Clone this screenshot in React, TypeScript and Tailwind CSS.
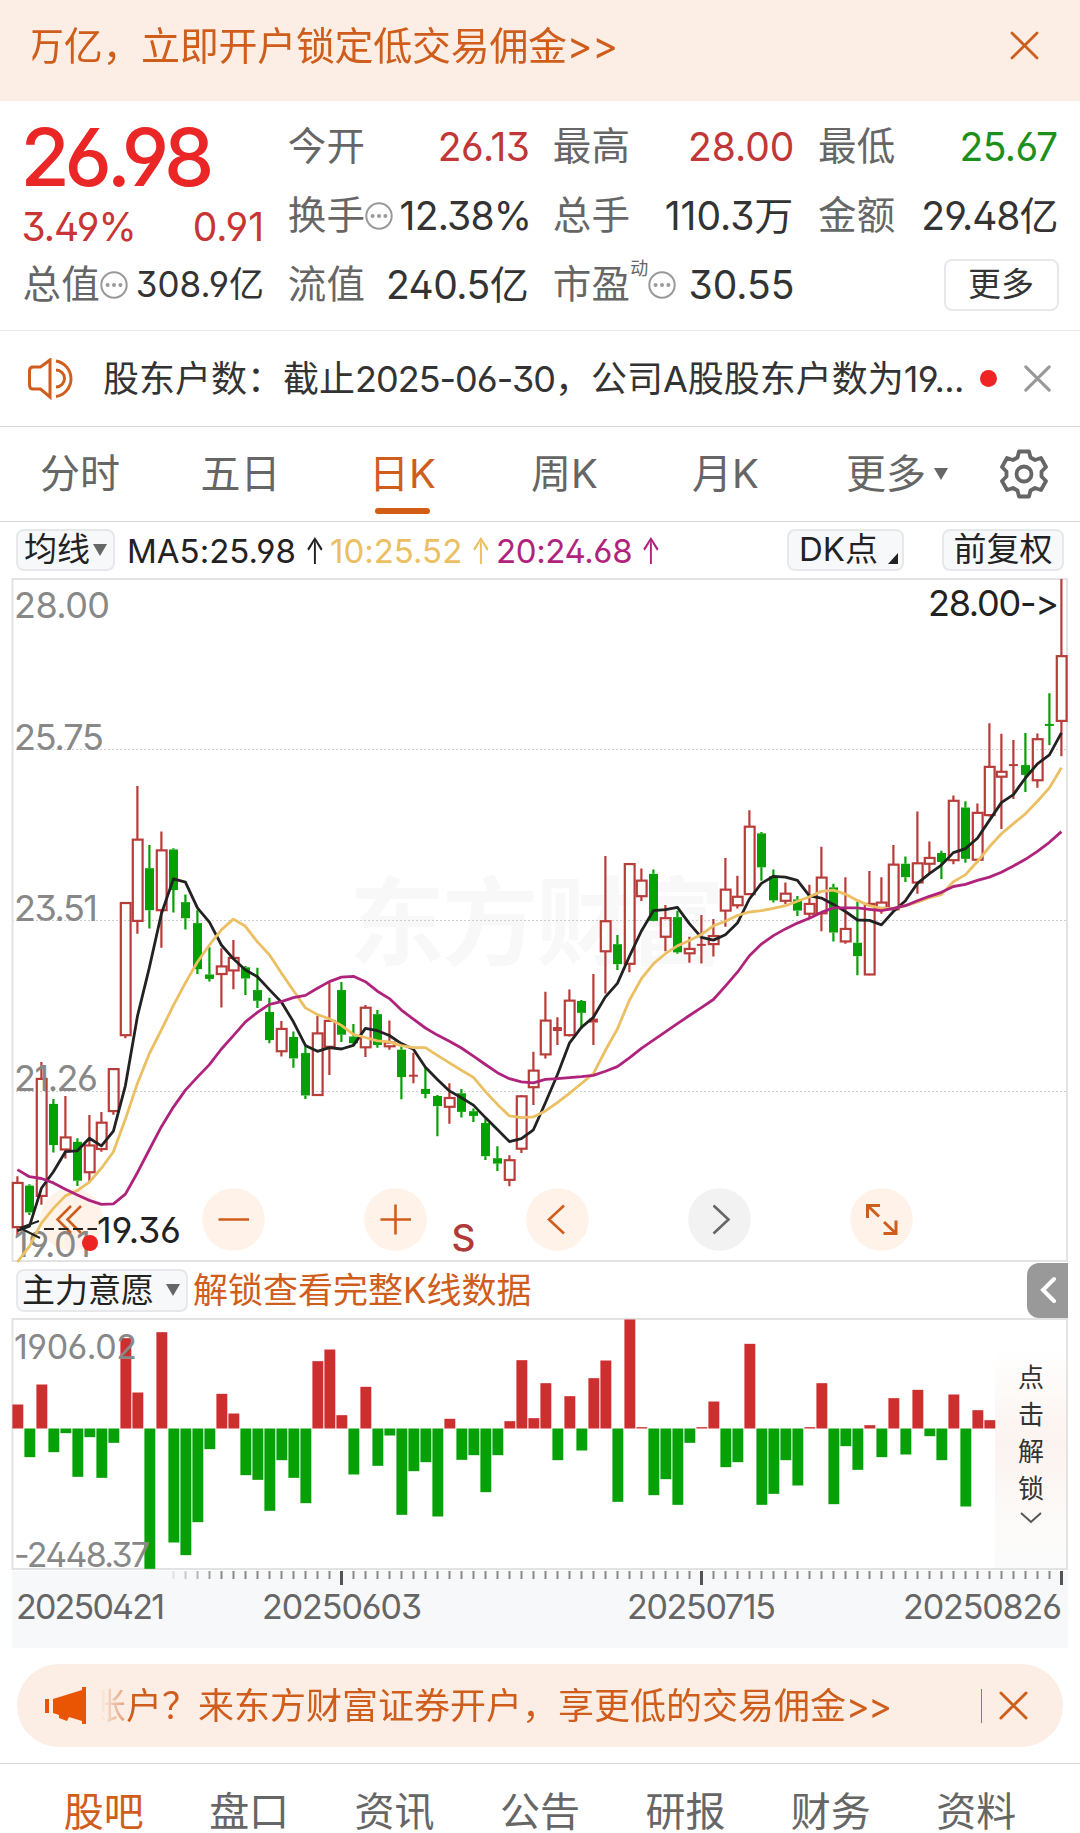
import React from "react";

type Candle = ["r" | "g", number, number, number, number];

// Each candle: colour, body top, body bottom, wick top, wick bottom.
const scaleA = (y: number) => 570 + y / 2.24;
const scaleB = (y: number) => 740 + y / 2.958;

const candlesLeft: Candle[] = [
  ["r", 1373, 1472, 1358, 1490], ["g", 1379, 1439, 1376, 1445], ["r", 1140, 1402, 1102, 1422],
  ["g", 1196, 1288, 1185, 1305], ["r", 1271, 1298, 1178, 1318], ["g", 1281, 1368, 1273, 1380],
  ["r", 1289, 1349, 1221, 1370], ["r", 1238, 1297, 1214, 1303], ["r", 1118, 1212, 1116, 1220],
  ["r", 746, 1042, 744, 1049], ["r", 604, 786, 484, 815], ["g", 668, 762, 616, 803],
  ["r", 628, 762, 586, 846], ["g", 626, 717, 623, 767], ["g", 744, 780, 727, 805],
  ["g", 791, 894, 762, 905], ["g", 906, 916, 845, 922], ["r", 888, 905, 847, 980],
  ["r", 869, 897, 829, 939], ["g", 890, 915, 887, 952], ["g", 941, 965, 891, 981],
  ["g", 990, 1053, 958, 1060], ["r", 1028, 1078, 1010, 1090], ["g", 1046, 1094, 1034, 1115],
  ["g", 1082, 1177, 1065, 1185], ["r", 1038, 1176, 999, 1178], ["r", 1010, 1068, 925, 1131],
  ["g", 941, 1041, 923, 1057], ["g", 1045, 1060, 1017, 1064],
];
const candlesMiddle: Candle[] = [
  ["r", 792, 909, 784, 938], ["g", 811, 902, 799, 910], ["r", 895, 906, 830, 916],
  ["g", 916, 997, 906, 1063], ["r", 993, 993, 925, 1015], ["g", 1032, 1047, 968, 1060],
  ["g", 1053, 1083, 1050, 1172], ["r", 1059, 1085, 1015, 1135], ["g", 1045, 1100, 1032, 1117],
  ["g", 1098, 1112, 1090, 1130], ["g", 1133, 1231, 1120, 1242], ["g", 1237, 1253, 1202, 1275],
  ["r", 1243, 1301, 1228, 1320], ["r", 1054, 1209, 1050, 1222], ["r", 978, 1027, 922, 1080],
  ["r", 830, 930, 745, 942], ["r", 855, 861, 820, 902], ["r", 771, 873, 738, 877],
  ["g", 772, 807, 769, 855], ["r", 830, 836, 692, 902], ["r", 536, 625, 343, 750],
  ["g", 604, 663, 577, 680], ["r", 367, 662, 364, 687], ["r", 416, 462, 380, 476],
  ["g", 396, 535, 383, 536], ["r", 527, 582, 488, 625], ["g", 524, 628, 505, 632],
  ["r", 618, 631, 582, 659], ["r", 606, 606, 518, 661],
];
const candlesRight: Candle[] = [
  ["r", 820, 838, 782, 866], ["r", 716, 763, 645, 799], ["r", 732, 751, 685, 758],
  ["r", 575, 726, 538, 728], ["g", 590, 666, 587, 696], ["g", 686, 740, 671, 745],
  ["r", 725, 741, 700, 748], ["g", 738, 763, 730, 775], ["r", 748, 770, 705, 782],
  ["r", 689, 769, 620, 809], ["g", 711, 812, 703, 832], ["r", 804, 832, 688, 837],
  ["g", 835, 865, 743, 908], ["r", 748, 906, 674, 908], ["r", 745, 757, 688, 770],
  ["r", 660, 760, 616, 762], ["g", 658, 688, 642, 699], ["r", 657, 700, 541, 725],
  ["r", 645, 658, 608, 680], ["g", 634, 654, 629, 692], ["r", 517, 650, 505, 659],
  ["g", 532, 647, 518, 656], ["r", 544, 649, 523, 655], ["r", 441, 549, 343, 552],
  ["r", 452, 463, 367, 580], ["r", 437, 437, 381, 513], ["g", 437, 459, 365, 497],
  ["r", 379, 471, 366, 488], ["g", 347, 347, 276, 392], ["r", 193, 338, 20, 417],
];

const mapCandle = (f: (y: number) => number) => (c: Candle): Candle => [c[0], f(c[1]), f(c[2]), f(c[3]), f(c[4])];
const candles: Candle[] = [
  ...candlesLeft.map(mapCandle(scaleA)),
  ...candlesMiddle.map(mapCandle(scaleB)),
  ...candlesRight.map(mapCandle(scaleA)),
];

const toLine = (a: number[], b: number[], c: number[]) =>
  [...a.map(scaleA), ...b.map(scaleB), ...c.map(scaleA)]
    .map((y, i) => `${(17.4 + 12 * i).toFixed(1)},${y.toFixed(1)}`)
    .join(" ");

const ma5 = toLine(
  [1480, 1470, 1385, 1348, 1303, 1301, 1273, 1290, 1257, 1155, 1000, 890, 770, 692, 699, 757, 789, 840, 871, 896, 911, 940, 968, 1012, 1065, 1078, 1070, 1073, 1065],
  [853, 860, 874, 898, 915, 968, 1004, 1038, 1058, 1080, 1117, 1152, 1188, 1179, 1153, 1073, 990, 897, 850, 820, 760, 720, 640, 565, 505, 502, 495, 543, 584],
  [829, 817, 791, 737, 702, 686, 688, 695, 730, 735, 749, 765, 784, 785, 795, 765, 741, 702, 680, 661, 633, 624, 601, 561, 521, 503, 466, 434, 414, 365],
);
const ma10 = toLine(
  [1550, 1515, 1463, 1430, 1402, 1390, 1371, 1340, 1303, 1230, 1150, 1083, 1030, 975, 925, 878, 840, 806, 782, 798, 833, 862, 903, 942, 981, 996, 1005, 1020, 1040],
  [880, 890, 893, 904, 910, 910, 933, 955, 977, 998, 1040, 1078, 1112, 1117, 1115, 1097, 1073, 1045, 1016, 987, 918, 855, 770, 706, 662, 632, 609, 593, 575],
  [797, 787, 774, 766, 763, 758, 752, 742, 732, 720, 717, 726, 740, 752, 758, 758, 752, 744, 734, 727, 698, 683, 653, 620, 591, 568, 546, 518, 488, 443],
);
const ma20 = toLine(
  [1343, 1359, 1363, 1373, 1387, 1400, 1412, 1421, 1420, 1398, 1350, 1298, 1247, 1203, 1165, 1136, 1108, 1073, 1043, 1012, 991, 973, 967, 958, 953, 937, 922, 912, 910],
  [715, 743, 765, 799, 826, 852, 873, 891, 911, 935, 960, 984, 1002, 1011, 1014, 1004, 1002, 999, 996, 992, 980, 966, 940, 912, 888, 863, 839, 815, 792],
  [962, 932, 901, 864, 838, 819, 804, 791, 780, 767, 757, 757, 757, 760, 763, 758, 752, 741, 731, 722, 709, 704, 695, 688, 677, 663, 648, 630, 610, 586],
);

// Signed bar lengths in thirds of a pixel; positive values rise above the zero line.
const flows = [
  72, -86, 132, -71, -14, -145, -26, -148, -43, 271, 108, -421, 289, -342, -380, -281, -62, 104, 45, -140, -154, -247,
  -95, -148, -224, 202, 237, 40, -138, 125, -112, -21, -259, -128, -101, -264, 29, -94, -80, -191, -80, 22, 205, 31,
  136, -95, 97, -66, 151, 204, -220, 327, 4, -200, -152, -229, -43, 4, 81, -116, -101, 254, -229, -196, -95, -171, 4,
  136, -227, -53, -124, 10, -86, 91, -78, 116, -23, -95, 102, -234, 55, 25,
];

const RED = "#b83c3a";
const GREEN = "#06a006";

function Cross({ size, width = 3 }: { size: number; width?: number }) {
  return (
    <svg width={size} height={size} viewBox="0 0 30 30" fill="none" stroke="currentColor" strokeWidth={width} strokeLinecap="round">
      <path d="M2 2 28 28M28 2 2 28" />
    </svg>
  );
}

function Dots() {
  return (
    <svg width="28" height="28" viewBox="0 0 28 28" fill="none">
      <circle cx="14" cy="14" r="12.7" stroke="#999" strokeWidth="2" />
      <g fill="#999"><circle cx="7.6" cy="14" r="2" /><circle cx="14" cy="14" r="2" /><circle cx="20.4" cy="14" r="2" /></g>
    </svg>
  );
}

function Triangle({ className = "" }: { className?: string }) {
  return (
    <svg width="14" height="12" viewBox="0 0 14 12" className={className}><path d="M0 0H14L7 12Z" fill="#666" /></svg>
  );
}

function Arrow() {
  return <span className="ml-[9px] inline-block w-[19px] origin-left scale-x-[0.72] scale-y-[1.12]">↑</span>;
}

function Quote({ label, value, tone = "text-[#333]", dots, sup, cls = "text-[39px] mr-[-2px]" }: { label: string; value: string; tone?: string; dots?: boolean; sup?: string; cls?: string }) {
  return (
    <div className="flex h-[69px] items-center whitespace-nowrap">
      <span className="text-[38.5px] tracking-[0.3px] text-[#666]">{label}</span>
      {sup && <span className="mb-8 text-[18px] text-[#666]">{sup}</span>}
      {dots && <Dots />}
      <span className={`ml-auto ${tone} ${cls}`}>{value}</span>
    </div>
  );
}

function PriceChart() {
  return (
    <svg width="1080" height="686" viewBox="0 577 1080 686" className="block" fill="none">
      <text x="349" y="957" fontSize="96" fontWeight="700" textLength="376" fill="#f8f8f8">东方财富</text>
      <g stroke="#cfcfcf" strokeWidth="1" strokeDasharray="2 2">
        <path d="M12 749.5H1067M12 920.5H1067M12 1091.5H1067" />
      </g>
      <rect x="12.5" y="579" width="1054.5" height="682" stroke="#e3e3e3" strokeWidth="2" />
      <g>
        {candles.map(([tone, top, bottom, high, low], i) => {
          const x = 17.4 + 12 * i;
          const colour = tone === "r" ? RED : GREEN;
          const flat = bottom - top < 3;
          return (
            <g key={i} stroke={colour} strokeWidth="2.2">
              <path d={`M${x} ${high}V${top}M${x} ${bottom}V${low}`} />
              {flat ? (
                <path d={`M${x - 4.5} ${top}h9`} strokeWidth={bottom > top ? 4 : 2} />
              ) : tone === "r" ? (
                <rect x={x - 4.6} y={top} width="9.8" height={bottom - top} />
              ) : (
                <rect x={x - 4.4} y={top} width="9" height={bottom - top} fill={GREEN} stroke="none" />
              )}
            </g>
          );
        })}
      </g>
      <g fill="#888" fontSize="36">
        <text x="14" y="618" textLength="96">28.00</text>
        <text x="14" y="750" textLength="90">25.75</text>
        <text x="14" y="921" textLength="84">23.51</text>
        <text x="14" y="1091" textLength="84">21.26</text>
      </g>
      <g fill="#fff1e8">
        {[71.5, 233.5, 395.5, 557.5, 881.5].map((x) => <circle key={x} cx={x} cy="1219.5" r="31.3" opacity="0.95" />)}
        <circle cx="719.5" cy="1219.5" r="31.3" fill="#f2f2f2" />
      </g>
      <text x="14" y="1257" fontSize="36" textLength="77" fill="#888">19.01</text>
      <g strokeWidth="2.8" strokeLinejoin="round">
        <polyline points={ma5} stroke="#222" />
        <polyline points={ma10} stroke="#ebbf62" />
        <polyline points={ma20} stroke="#b0237c" />
      </g>
      <g stroke="#cf5d1c" strokeWidth="2.6">
        <path d="M71 1206 57.5 1219.5 71 1233M81 1206 67.5 1219.5 81 1233" />
        <path d="M218.5 1219.5H249M380.5 1219.5H411M395.5 1204.5V1234.5M564 1205.5 549 1219.5 564 1233.5" />
        <path d="M713.5 1205.5 728.5 1219.5 713.5 1233.5" stroke="#666" />
        <path d="M867.5 1218V1205.5H880M868 1206 879 1216.5M896 1220.5V1233.5H883.5M895.5 1233 884 1222" strokeWidth="3" />
      </g>
      <path d="M20 1228 39 1221M20 1228 40 1238" stroke="#222" strokeWidth="2" />
      <path d="M44 1229H97" stroke="#222" strokeWidth="2" strokeDasharray="10 4.5" />
      <text x="97" y="1243" fontSize="36" textLength="84" fill="#222">19.36</text>
      <circle cx="90" cy="1243" r="8" fill="#ee2424" />
      <text x="928" y="616" fontSize="36" textLength="131" fill="#222">28.00-&gt;</text>
      <text x="451.5" y="1251" fontSize="37" fontWeight="450" textLength="23" fill="#b03a38">S</text>
    </svg>
  );
}

function FlowChart() {
  return (
    <svg width="1080" height="331" viewBox="0 1317 1080 331" className="block" fill="none">
      <defs>
        <linearGradient id="unlock" x1="0" y1="0" x2="0" y2="1">
          <stop offset="0.12" stopColor="#fff" /><stop offset="0.5" stopColor="#fbf3ef" /><stop offset="0.85" stopColor="#fcfbfa" /><stop offset="1" stopColor="#fafafa" />
        </linearGradient>
      </defs>
      <rect x="995" y="1320" width="72" height="248" fill="url(#unlock)" />
      <rect x="12.5" y="1319" width="1054.5" height="250" stroke="#e3e3e3" strokeWidth="2" />
      {flows.map((v, i) => (
        <rect key={i} x={12.4 + 12 * i} y={v > 0 ? 1428.5 - v / 3 : 1428.5} width="10.9" height={Math.abs(v) / 3} fill={v > 0 ? "#cd2e2e" : "#07a007"} />
      ))}
      <g fill="#888" fontSize="34">
        <text x="14" y="1359" textLength="123">1906.02</text>
        <text x="14" y="1567" textLength="136">-2448.37</text>
      </g>
      <g fill="#333" fontSize="26" textAnchor="middle">
        <text x="1031" y="1387">点</text><text x="1031" y="1424">击</text><text x="1031" y="1461">解</text><text x="1031" y="1498">锁</text>
      </g>
      <path d="M1021 1513 1031 1522 1041 1513" stroke="#555" strokeWidth="2" />
      <rect x="12" y="1571" width="1056" height="77" fill="#f7f8fa" />
      {Array.from({ length: 75 }, (_, k) => {
        const i = k + 13;
        const major = i === 27 || i === 57 || i === 87;
        return <path key={i} d={`M${17.5 + 12 * i} 1571v${major ? 14 : 8}`} stroke={major ? "#555" : "#888"} strokeWidth={major ? 3 : 2} opacity={k < 4 ? 0.2 + k * 0.2 : 1} />;
      })}
      <g fill="#666" fontSize="34">
        <text x="16" y="1619" textLength="149">20250421</text>
        <text x="262" y="1619" textLength="160">20250603</text>
        <text x="627" y="1619" textLength="149">20250715</text>
        <text x="903" y="1619" textLength="159">20250826</text>
      </g>
    </svg>
  );
}

const chip = "flex items-center rounded-lg border-2 border-[#e6e8ec] bg-[#f7f8fa] text-[33px] text-[#222]";

export default function App() {
  return (
    <div className="flex h-[1833px] w-[1080px] flex-col overflow-hidden whitespace-nowrap bg-white font-['Inter','Noto_Sans_CJK_SC',sans-serif] leading-none font-[370] [font-feature-settings:'ss01','calt'_0]">
      <div className="flex h-[101px] shrink-0 items-center bg-[#fceee5] pr-[41px] pb-[10px] pl-[25px] text-[#cf5d1c]">
        <span className="text-[39px] tracking-[-0.3px] [mask-image:linear-gradient(to_right,transparent_7px,black_8px)]">万亿，立即开户锁定低交易佣金&gt;&gt;</span>
        <span className="ml-auto"><Cross size={29} width={2.8} /></span>
      </div>

      <div className="grid h-[229px] shrink-0 auto-rows-[69px] grid-cols-4 content-start gap-x-[25.5px] px-[22.5px] pt-[11px]">
        <div className="row-span-2 flex flex-col">
          <div className="ml-[-2px] flex h-[90px] items-center text-[80px] font-medium tracking-[-5.2px] text-[#ea2626]">26.98</div>
          <div className="mr-[-2px] flex h-[48px] items-center justify-between text-[39px] text-[#c93434]"><span className="ml-[-1px] tracking-[-1px]">3.49%</span><span>0.91</span></div>
        </div>
        <Quote label="今开" value="26.13" tone="text-[#c13636]" cls="text-[39px] tracking-[-0.6px] mr-[-2px]" />
        <Quote label="最高" value="28.00" tone="text-[#c13636]" />
        <Quote label="最低" value="25.67" tone="text-[#1c8f1c]" cls="text-[39px] tracking-[-0.6px]" />
        <Quote label="换手" value="12.38%" dots cls="text-[39px] tracking-[-0.8px] mr-[-4px]" />
        <Quote label="总手" value="110.3万" cls="text-[39px] mr-[-1px]" />
        <Quote label="金额" value="29.48亿" cls="text-[39px] tracking-[-1px]" />
        <Quote label="总值" value="308.9亿" dots cls="text-[35px] mr-[-2px]" />
        <Quote label="流值" value="240.5亿" cls="text-[39px] tracking-[-0.5px] mr-[-1px]" />
        <Quote label="市盈" value="30.55" sup="动" dots />
        <div className="flex h-[69px] items-center justify-end">
          <button className="mr-[-1px] h-[52px] w-[115px] rounded-lg border-2 border-[#e6e8ec] text-[33px] text-[#333]">更多</button>
        </div>
      </div>

      <div className="flex h-[96px] shrink-0 items-center border-t border-[#e9e9e9] pr-[29px] pl-[27px] text-[#333]">
        <svg width="50" height="42" viewBox="0 0 50 42" fill="none" stroke="#cf5d1c" strokeWidth="3">
          <path d="M23 2 13.5 9H6Q2.5 9 2.5 13V27Q2.5 31 6 31H13.5L23 39Z" />
          <path d="M29 12A8.5 8.5 0 0 1 29 29M29 3A18 18 0 0 1 29 38.5" />
        </svg>
        <span className="ml-[26px] text-[36px]">股东户数：截止<span className="tracking-[-1px]">2025-06-30</span>，公司A股股东户数为<span className="tracking-[-0.6px]">19...</span></span>
        <span className="ml-auto size-[17px] rounded-full bg-[#f02424]" />
        <span className="ml-[27px] text-[#999]"><Cross size={27} width={3.4} /></span>
      </div>

      <div className="flex h-[96px] shrink-0 items-center border-y border-[#d6d6d6] text-[40px] text-[#666]">
        <div className="flex w-[160px] justify-center">分时</div>
        <div className="flex w-[161px] justify-center">五日</div>
        <div className="relative flex h-full w-[163px] items-center justify-center text-[#cf5d1c]">日K<span className="absolute bottom-[7px] left-[54px] h-[6px] w-[55px] rounded-full bg-[#d45d15]" /></div>
        <div className="flex w-[161px] justify-center">周K</div>
        <div className="flex w-[161px] justify-center">月K</div>
        <div className="ml-[40px]">更多</div>
        <Triangle className="ml-[8px]" />
        <svg className="ml-[52px]" width="48" height="50" viewBox="-24 -25 48 50" fill="none" stroke="#666" strokeWidth="3.8" strokeLinejoin="round">
          <path d="M-5-22.500H5L6.500-16.500 11-14 17-16 22-7 17.500-2.500V2.500L22 7 17 16 11 14 6.500 16.500 5 22.500H-5L-6.500 16.500-11 14-17 16-22 7-17.500 2.500V-2.500L-22-7-17-16-11-14-6.500-16.500Z" />
          <circle r="7.5" />
        </svg>
      </div>

      <div className="flex h-[55px] shrink-0 items-center pl-4 text-[33px] pr-4">
        <div className={`${chip} h-[42px] w-[99px] justify-center`}>均线<Triangle className="ml-[3px]" /></div>
        <span className="mt-[3px] ml-[12px] w-[203px] text-[#222]">MA5:25.98<Arrow /></span>
        <span className="mt-[3px] w-[166px] text-[#ebbf62]">10:25.52<Arrow /></span>
        <span className="mt-[3px] tracking-[-0.4px] text-[#b0237c]">20:24.68<Arrow /></span>
        <div className={`${chip} relative ml-auto h-[42px] w-[117px] pl-[10px]`}>DK点<svg className="absolute right-[4px] bottom-[5px]" width="10" height="11"><path d="M10 0V11H0Z" fill="#222" /></svg></div>
        <div className={`${chip} ml-[38px] h-[42px] w-[122px] justify-center`}>前复权</div>
      </div>

      <div className="shrink-0"><PriceChart /></div>

      <div className="flex h-[54px] shrink-0 items-center pr-3 pl-4">
        <div className={`${chip} h-[43px] w-[172px] pl-[4px]`}>主力意愿<Triangle className="ml-[12px]" /></div>
        <span className="ml-[5px] text-[35px] text-[#cf5d1c]">解锁查看完整K线数据</span>
        <div className="ml-auto flex h-[55px] w-[41px] items-center justify-center rounded-l-xl bg-[#999]">
          <svg width="16" height="28" viewBox="0 0 16 28" fill="none" stroke="#fff" strokeWidth="4" strokeLinecap="round"><path d="M14 3 3 14 14 25" /></svg>
        </div>
      </div>

      <div className="shrink-0"><FlowChart /></div>

      <div className="mx-[17px] mt-4 flex h-[83px] shrink-0 items-center rounded-full bg-[#fceee5] pr-[35px] pl-[28px] text-[#cf5d1c]">
        <svg width="41" height="37" viewBox="0 0 41 37" fill="#ea5504"><path d="M0 12H4V26H0ZM8 12 37 3V0H41V37H37V34L24 30 22 34 14 31V28L8 26Z" /></svg>
        <span className="ml-[4px] text-[36px] [mask-image:linear-gradient(to_right,transparent_10px,rgba(0,0,0,0.5)_34px,black_36px)]">账户？来东方财富证券开户，享更低的交易佣金<span className="tracking-[-1.5px]">&gt;&gt;</span></span>
        <span className="ml-auto h-[34px] w-px bg-[#b07050]" />
        <span className="ml-[17px]"><Cross size={29} width={3} /></span>
      </div>

      <div className="mt-4 grid h-[70px] shrink-0 grid-cols-7 border-t border-[#d6d6d6] px-[31px] text-[40px] text-[#666]">
        {["股吧", "盘口", "资讯", "公告", "研报", "财务", "资料"].map((t, i) => (
          <span key={t} className={`flex justify-center pt-[28px] ${i === 0 ? "text-[#cf5d1c]" : ""}`}>{t}</span>
        ))}
      </div>
    </div>
  );
}
